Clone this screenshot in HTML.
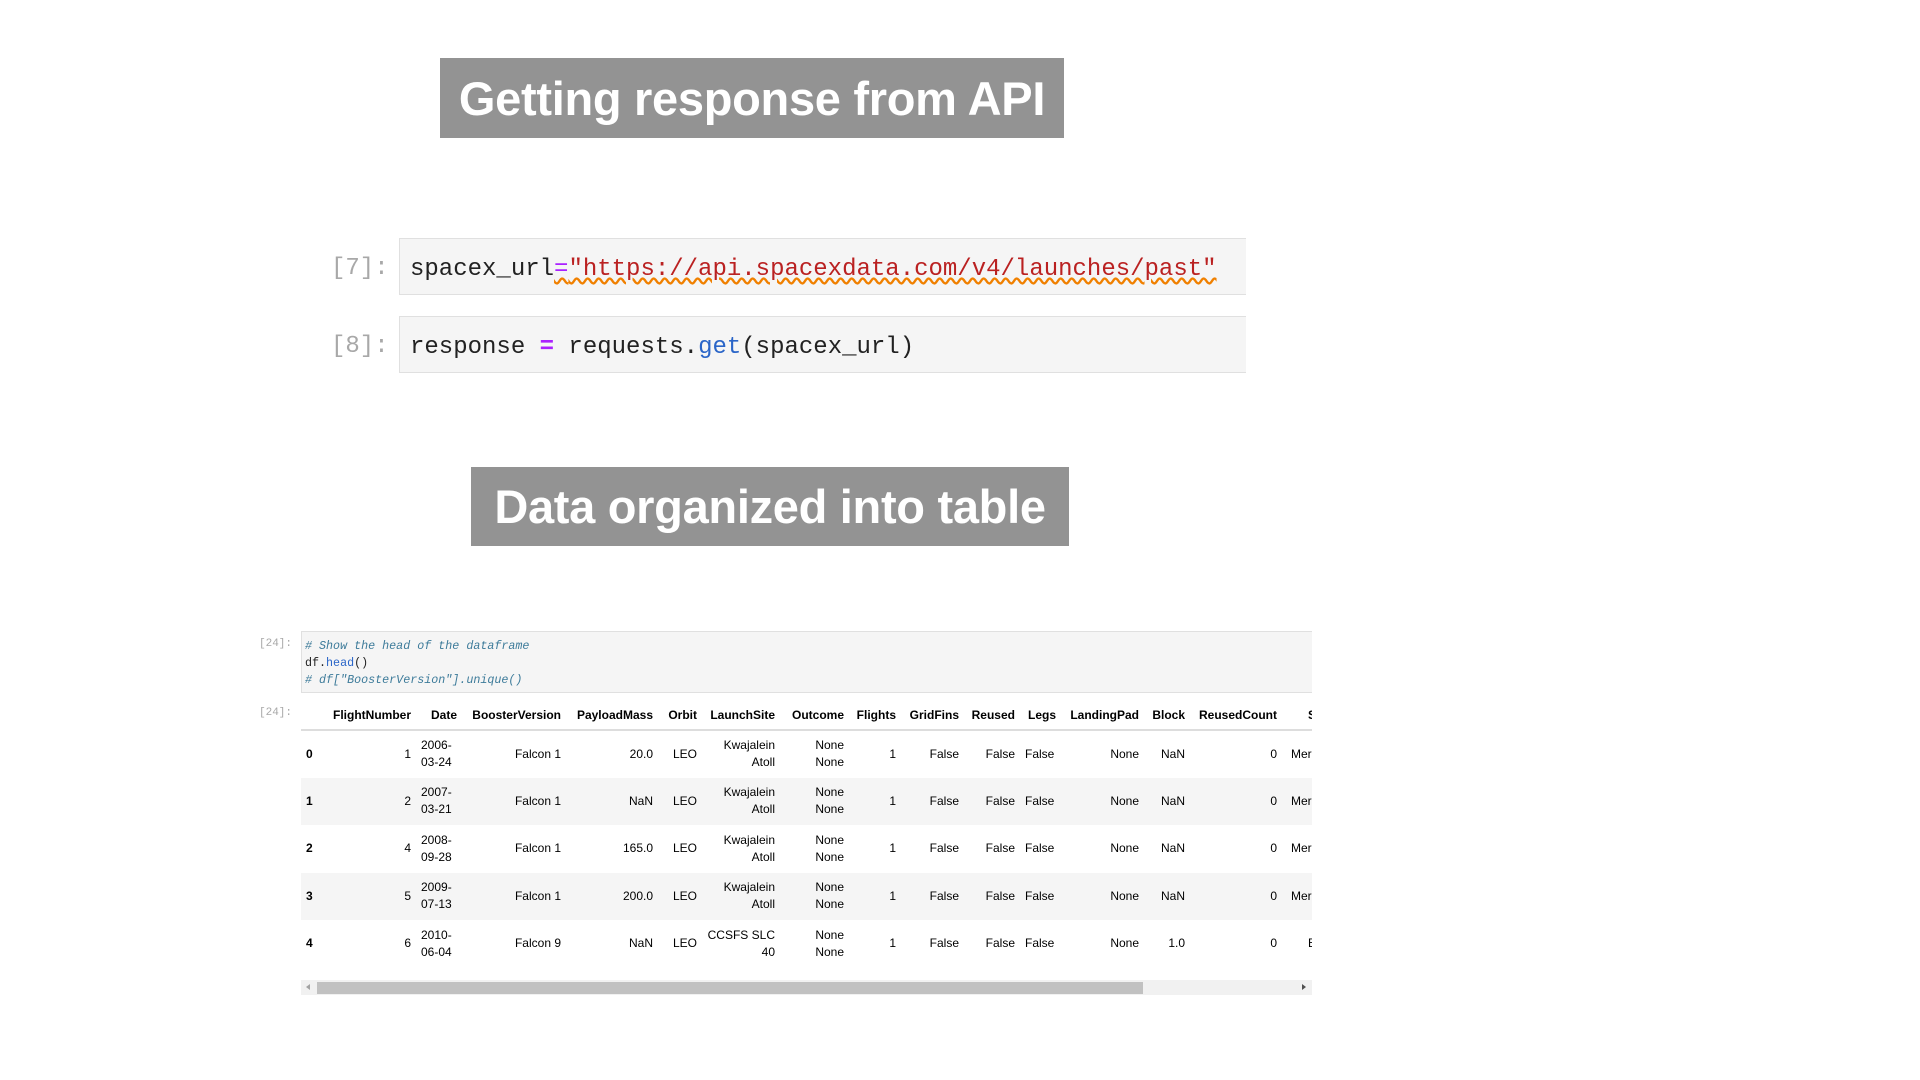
<!DOCTYPE html>
<html><head><meta charset="utf-8"><style>
*{margin:0;padding:0;box-sizing:border-box}
body{width:1920px;height:1080px;background:#fff;position:relative;overflow:hidden;font-family:"Liberation Sans",sans-serif}
.title{position:absolute;background:#939393;color:#fff;font-weight:bold;font-size:47px;display:flex;align-items:center;justify-content:center;letter-spacing:-0.3px}
.cell{position:absolute;background:#f5f5f5;border:1px solid #e0e0e0;border-right:none}
.code{font-family:"Liberation Mono",monospace;white-space:pre;position:absolute}
.prompt{position:absolute;font-family:"Liberation Mono",monospace;color:#a8a8a8}
table{border-collapse:collapse;table-layout:fixed;font-size:12px;color:#000}
td,th{text-align:right;padding:0 5px;white-space:normal;line-height:17px;overflow:hidden}
th{font-weight:bold;height:29px;border-bottom:2px solid #ddd;white-space:nowrap;vertical-align:middle}
tbody tr{height:47.5px}
tbody tr:nth-child(even){background:#f5f5f5}
td:first-child{text-align:left;font-weight:bold;padding-left:5px}
</style></head><body>

<div class="title" style="left:440px;top:58px;width:624px;height:80px">Getting response from API</div>

<div class="prompt" style="left:331px;top:255px;font-size:24px">[7]:</div>
<div class="cell" style="left:399px;top:238px;width:847px;height:57px"></div>
<div class="code" style="left:410px;top:255px;font-size:24px;line-height:30px;color:#222">spacex_url<span style="color:#aa22ff;text-decoration:underline wavy #f08000">=</span><span style="color:#ba2121;text-decoration:underline wavy #f08000">"https://api.spacexdata.com/v4/launches/past"</span></div>

<div class="prompt" style="left:331px;top:333px;font-size:24px">[8]:</div>
<div class="cell" style="left:399px;top:316px;width:847px;height:57px"></div>
<div class="code" style="left:410px;top:333px;font-size:24px;line-height:30px;color:#222">response <span style="color:#aa22ff;font-weight:bold">=</span> requests.<span style="color:#2a65c8">get</span>(spacex_url)</div>

<div class="title" style="left:471px;top:467px;width:598px;height:79px">Data organized into table</div>

<div class="prompt" style="left:259px;top:638px;font-size:11px">[24]:</div>
<div class="cell" style="left:301px;top:631px;width:1011px;height:62px"></div>
<div class="code" style="left:305px;top:638px;font-size:11.7px;line-height:17px;color:#222"><i style="color:#3d7b9a"># Show the head of the dataframe</i>
df.<span style="color:#2a65c8">head</span>()
<i style="color:#3d7b9a"># df["BoosterVersion"].unique()</i></div>

<div class="prompt" style="left:259px;top:707px;font-size:11px">[24]:</div>
<div style="position:absolute;left:301px;top:701px;width:1011px;height:279px;overflow:hidden">
<table style="width:1120px">
<colgroup><col style="width:21px"><col style="width:94px"><col style="width:46px"><col style="width:104px"><col style="width:92px"><col style="width:44px"><col style="width:78px"><col style="width:69px"><col style="width:52px"><col style="width:63px"><col style="width:56px"><col style="width:41px"><col style="width:83px"><col style="width:46px"><col style="width:92px"><col style="width:139px"></colgroup>
<thead><tr><th></th><th>FlightNumber</th><th>Date</th><th>BoosterVersion</th><th>PayloadMass</th><th>Orbit</th><th>LaunchSite</th><th>Outcome</th><th>Flights</th><th>GridFins</th><th>Reused</th><th>Legs</th><th>LandingPad</th><th>Block</th><th>ReusedCount</th><th style="text-align:left;padding-left:26px">Serial</th></tr></thead>
<tbody>
<tr><td>0</td><td>1</td><td style="text-align:left">2006-<br>03-24</td><td>Falcon 1</td><td>20.0</td><td>LEO</td><td>Kwajalein<br>Atoll</td><td>None<br>None</td><td>1</td><td>False</td><td>False</td><td style="text-align:left">False</td><td>None</td><td>NaN</td><td>0</td><td style="text-align:left;padding-left:9px">Merlin1A</td></tr>
<tr><td>1</td><td>2</td><td style="text-align:left">2007-<br>03-21</td><td>Falcon 1</td><td>NaN</td><td>LEO</td><td>Kwajalein<br>Atoll</td><td>None<br>None</td><td>1</td><td>False</td><td>False</td><td style="text-align:left">False</td><td>None</td><td>NaN</td><td>0</td><td style="text-align:left;padding-left:9px">Merlin2A</td></tr>
<tr><td>2</td><td>4</td><td style="text-align:left">2008-<br>09-28</td><td>Falcon 1</td><td>165.0</td><td>LEO</td><td>Kwajalein<br>Atoll</td><td>None<br>None</td><td>1</td><td>False</td><td>False</td><td style="text-align:left">False</td><td>None</td><td>NaN</td><td>0</td><td style="text-align:left;padding-left:9px">Merlin2C</td></tr>
<tr><td>3</td><td>5</td><td style="text-align:left">2009-<br>07-13</td><td>Falcon 1</td><td>200.0</td><td>LEO</td><td>Kwajalein<br>Atoll</td><td>None<br>None</td><td>1</td><td>False</td><td>False</td><td style="text-align:left">False</td><td>None</td><td>NaN</td><td>0</td><td style="text-align:left;padding-left:9px">Merlin3C</td></tr>
<tr><td>4</td><td>6</td><td style="text-align:left">2010-<br>06-04</td><td>Falcon 9</td><td>NaN</td><td>LEO</td><td>CCSFS SLC<br>40</td><td>None<br>None</td><td>1</td><td>False</td><td>False</td><td style="text-align:left">False</td><td>None</td><td>1.0</td><td>0</td><td style="text-align:left;padding-left:26px">B0003</td></tr>
</tbody></table></div>

<div style="position:absolute;left:301px;top:980px;width:1011px;height:15px;background:#f1f1f1">
<div style="position:absolute;left:16px;top:2px;width:826px;height:12px;background:#c1c1c1"></div>
<div style="position:absolute;left:5px;top:4px;width:0;height:0;border-top:3.5px solid transparent;border-bottom:3.5px solid transparent;border-right:4px solid #a3a3a3"></div>
<div style="position:absolute;right:6px;top:4px;width:0;height:0;border-top:3.5px solid transparent;border-bottom:3.5px solid transparent;border-left:4px solid #505050"></div>
</div>
</body></html>
